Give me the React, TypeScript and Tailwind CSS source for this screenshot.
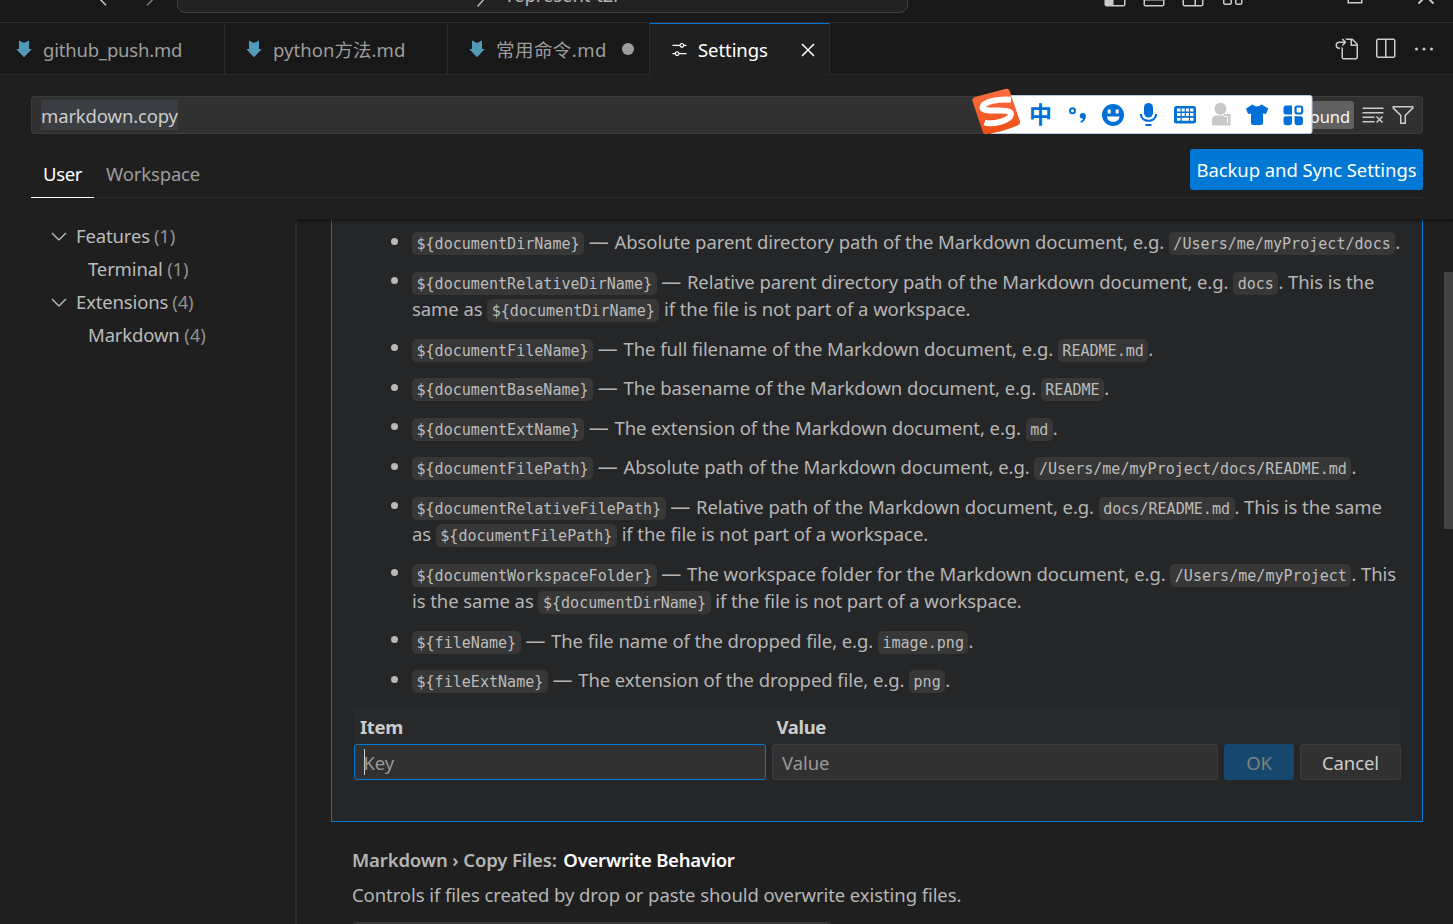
import React from "react";
import { VscSettings, VscClose, VscGoToFile, VscSplitHorizontal, VscEllipsis, VscClearAll, VscFilter, VscChevronDown, VscLayoutSidebarLeft, VscLayoutPanelOff, VscLayoutSidebarRightOff, VscLayout, VscChromeMaximize, VscChromeClose, VscArrowLeft, VscArrowRight, VscSearch } from "react-icons/vsc";

const Code = ({ children }: { children: React.ReactNode }) => (
  <code className="rounded-[5px] bg-[#373737] px-[4.5px] py-[2.5px] align-[0.5px] font-['DejaVu_Sans_Mono',monospace] text-[15.06px] leading-none tracking-normal text-[#bcbcbc]">{children}</code>
);

type Part = string | { c: string };

const rows: { name: string; lines: Part[][] }[] = [
  { name: "DirName", lines: [[{ c: "${documentDirName}" }, " — Absolute parent directory path of the Markdown document, e.g. ", { c: "/Users/me/myProject/docs" }, "."]] },
  { name: "RelDir", lines: [[{ c: "${documentRelativeDirName}" }, " — Relative parent directory path of the Markdown document, e.g. ", { c: "docs" }, ". This is the"], ["same as ", { c: "${documentDirName}" }, " if the file is not part of a workspace."]] },
  { name: "FileName", lines: [[{ c: "${documentFileName}" }, " — The full filename of the Markdown document, e.g. ", { c: "README.md" }, "."]] },
  { name: "BaseName", lines: [[{ c: "${documentBaseName}" }, " — The basename of the Markdown document, e.g. ", { c: "README" }, "."]] },
  { name: "ExtName", lines: [[{ c: "${documentExtName}" }, " — The extension of the Markdown document, e.g. ", { c: "md" }, "."]] },
  { name: "FilePath", lines: [[{ c: "${documentFilePath}" }, " — Absolute path of the Markdown document, e.g. ", { c: "/Users/me/myProject/docs/README.md" }, "."]] },
  { name: "RelFile", lines: [[{ c: "${documentRelativeFilePath}" }, " — Relative path of the Markdown document, e.g. ", { c: "docs/README.md" }, ". This is the same"], ["as ", { c: "${documentFilePath}" }, " if the file is not part of a workspace."]] },
  { name: "Workspace", lines: [[{ c: "${documentWorkspaceFolder}" }, " — The workspace folder for the Markdown document, e.g. ", { c: "/Users/me/myProject" }, ". This"], ["is the same as ", { c: "${documentDirName}" }, " if the file is not part of a workspace."]] },
  { name: "File", lines: [[{ c: "${fileName}" }, " — The file name of the dropped file, e.g. ", { c: "image.png" }, "."]] },
  { name: "FileExt", lines: [[{ c: "${fileExtName}" }, " — The extension of the dropped file, e.g. ", { c: "png" }, "."]] },
];

const LinePart = ({ part }: { part: Part }) => {
  if (typeof part !== "string") return <Code>{part.c}</Code>;
  if (part.startsWith(" — ")) return <span> <span className="text-[20px]">—</span><span className="ml-[1px]">{part.slice(2)}</span></span>;
  return <span>{part}</span>;
};

const MdIcon = () => (
  <svg className="h-[18px] w-4 shrink-0" viewBox="0 0 16 18"><path fill="#519aba" d="M3 0.5 8 3l5-2.5V9h2.8L8 17.3 0.2 9H3z" /></svg>
);

const ImeBar = () => (
  <div className="absolute -top-[10px] left-[939px] flex h-[48px] w-[342px]">
    <svg className="h-full w-full" viewBox="971 87 342 48" fill="#0070d8">
      <defs>
        <linearGradient id="ime" x1="0" y1="0" x2="0" y2="1"><stop offset="0" stopColor="#fb7042" /><stop offset="1" stopColor="#ee4d12" /></linearGradient>
      </defs>
      <rect x="990" y="95.5" width="322" height="38" rx="2" fill="#fff" stroke="#b9cbe4" />
      <path fill="url(#ime)" d="M975 97 1006 88.8Q1008.500 88.300 1009.500 90.500L1020 121.500Q1020.500 124 1018 125.300Q1003 132 986 134.300Q983.500 134.500 982.800 132L972.300 100.500Q972 98 975 97Z" />
      <path fill="none" stroke="#fff" strokeWidth="6" d="M1011 99.700C1000 98.500 982.500 101.500 982.500 107.500C983 114 1010.500 107 1011 114C1010.500 121 992 125 984.500 122.500" />
      <text x="1029" y="123" fontSize="23" fontWeight="700" className="font-['Noto_Sans_CJK_SC',sans-serif] tracking-normal">中</text>
      <circle cx="1072.500" cy="110.800" r="2.500" fill="none" stroke="#0070d8" strokeWidth="2" />
      <path d="M1079.700 116a3.100 3.100 0 1 1 6.200 0c0 3.500-2 6-5.200 7v-2c1.500-.5 2.200-1.300 2.300-2.200-2 0-3.300-1.200-3.300-2.800z" />
      <circle cx="1113" cy="115" r="11" />
      <path fill="#fff" d="M1107.700 109.500h3v4h-3zM1115.700 109.500h3v4h-3zM1107 116.500h12.500c0 7-12.500 7-12.500 0z" />
      <rect x="1144" y="103" width="9" height="14.500" rx="4.500" />
      <path fill="none" stroke="#0070d8" strokeWidth="2.200" d="M1140.800 114c.5 9 14.900 9 15.400 0M1145.500 125h6" />
      <rect x="1174" y="106" width="22" height="17.500" rx="2.500" />
      <path fill="#fff" d="M1177 108.500h3.500v3h-3.500zM1181.700 108.500h3v3h-3zM1185.900 108.500h3v3h-3zM1190 108.500h3.500v3h-3.500zM1177 113h3.500v3h-3.500zM1181.700 113h3v3h-3zM1185.900 113h3v3h-3zM1190 113h3.500v3h-3.500zM1177 117.700h3.500v3h-3.500zM1181.700 117.700h7.200v3h-7.200zM1190 117.700h3.500v3h-3.500z" />
      <g fill="#c8c8c8"><circle cx="1220.500" cy="108.800" r="6" /><path d="M1212 125v-5q0-4.500 4.500-4.500h7.500v-1.500h6.500v11.500h-18z" /></g>
      <path fill="none" stroke="#fff" d="M1224 116.500h3.500v6.500" />
      <path d="M1246 108.500 1252.500 104.500q4.500 4 9 0l6.800 4-2.300 5.500-3 -.5V123q0 2-2 2h-8q-2 0-2-2v-9.500l-3 .5z" />
      <path d="M1286.500 105.500h5.500v9h-6a2.500 2.500 0 0 1-2.500-2.500v-3.500a3 3 0 0 1 3-3zM1286 116.200h6v6a3 3 0 0 1-3 3h-2.500a3 3 0 0 1-3-3v-3.500a2.500 2.500 0 0 1 2.500-2.500zM1294.500 116.200h6a2.500 2.500 0 0 1 2.500 2.500v3.500a3 3 0 0 1-3 3h-2.500a3 3 0 0 1-3-3z" />
      <rect x="1295.500" y="106.500" width="6.700" height="7" rx="2" fill="#fff" stroke="#0070d8" strokeWidth="2.200" />
    </svg>
  </div>
);

export default function App() {
  return (
    <div className="flex h-[924px] w-[1453px] flex-col overflow-hidden bg-[#1f1f1f] font-['Noto_Sans','Noto_Sans_CJK_SC',sans-serif] text-[18.5px] tracking-[-0.08px] text-[#b5b5b5]">
      <header className="flex h-[23px] shrink-0 items-end overflow-hidden border-b border-[#2b2b2b] bg-[#181818]">
        <div className="mb-[13px] flex w-[177px] shrink-0 items-center gap-[15px] pl-[95px] text-2xl">
          <VscArrowLeft className="shrink-0 text-[#cccccc]" />
          <VscArrowRight className="shrink-0 text-[#777]" />
        </div>
        <div className="mb-[9px] flex h-[36px] w-[731px] shrink-0 items-center justify-center rounded-lg border border-[#3f3f3f] bg-[#222222] pl-[9px]">
          <VscSearch className="mr-[7px] text-2xl" /><span className="leading-6">represent-t2i</span>
        </div>
        <div className="mb-[14px] ml-[195px] flex gap-[15px] text-2xl text-[#cccccc]">
          <VscLayoutSidebarLeft /><VscLayoutPanelOff /><VscLayoutSidebarRightOff /><VscLayout />
        </div>
        <div className="mb-[14px] ml-[99px] flex gap-[47px] text-2xl text-[#cccccc]"><VscChromeMaximize /><VscChromeClose /></div>
      </header>

      <nav className="flex h-[52px] shrink-0 bg-[#181818] text-[#9d9d9d]">
        <div className="flex w-[225px] items-center gap-[11px] border-r border-b border-[#2b2b2b] pl-4"><MdIcon /><span className="pt-[2px] tracking-[-0.2px]">github_push.md</span></div>
        <div className="flex w-[223px] items-center gap-[11px] border-r border-b border-[#2b2b2b] pl-[21px]"><MdIcon /><span className="pt-[2px] tracking-[0.05px]">python方法.md</span></div>
        <div className="flex w-[202px] items-center gap-[11px] border-r border-b border-[#2b2b2b] pl-[21px]"><MdIcon /><span className="w-[111px] pt-[2px] tracking-[0.45px] whitespace-nowrap">常用命令.md</span><i className="ml-[4px] size-3 rounded-full bg-[#9d9d9d]" /></div>
        <div className="flex w-[180px] items-center border-t border-r border-t-[#0078d4] border-r-[#2b2b2b] bg-[#1f1f1f] pl-5 text-white"><VscSettings className="text-[19px]" /><span className="ml-[9px] w-[70px]">Settings</span><VscClose className="ml-[28px] text-2xl" /></div>
        <div className="flex flex-1 items-center justify-end gap-[15px] border-b border-[#2b2b2b] pr-[17px] text-2xl text-[#cccccc]"><VscGoToFile /><VscSplitHorizontal /><VscEllipsis /></div>
      </nav>

      <div className="relative mt-[21px] ml-[31px] flex h-[38px] w-[1392px] shrink-0 items-center rounded-[3px] border border-[#3c3c3c] bg-[#313131] pl-[9px] text-[#cccccc]">
        <span className="h-[30px] bg-[#3a3d41] leading-[31px] tracking-[-0.15px]">markdown.copy</span>
        <span className="ml-auto flex h-7 w-[140px] items-center justify-end rounded-[3px] bg-[#616161] pt-[4px] pr-1 text-[16.5px] whitespace-nowrap text-[#f8f8f8]">5 Settings Found</span>
        <VscClearAll className="ml-[7px] text-2xl" /><VscFilter className="mr-[7px] ml-[6px] text-2xl" />
        <ImeBar />
      </div>

      <div className="mt-[14px] ml-[31px] flex h-[50px] w-[1392px] shrink-0 border-b border-[#2b2b2b]">
        <div className="-mb-px flex w-[63px] items-center justify-center border-b border-white pt-[2px] tracking-[-0.35px] text-white">User</div>
        <div className="flex items-center pt-[3px] pl-3 tracking-[-0.15px] text-[#9d9d9d]">Workspace</div>
        <button className="mt-px ml-auto h-[41px] w-[233px] rounded-[3px] bg-[#0078d4] text-white">Backup and Sync Settings</button>
      </div>

      <main className="mt-[21px] flex min-h-0 flex-1">
        <aside className="w-[295px] shrink-0 leading-[33px] tracking-[-0.15px] text-[#bbbbbb]">
          <div className="flex items-center pl-[47px]"><VscChevronDown className="mr-[5px] text-2xl" />Features <span className="ml-[4px] text-[#919191]">(1)</span></div>
          <div className="pl-[88px]">Terminal <span className="text-[#919191]">(1)</span></div>
          <div className="flex items-center pl-[47px]"><VscChevronDown className="mr-[5px] text-2xl" />Extensions <span className="ml-[4px] text-[#919191]">(4)</span></div>
          <div className="pl-[88px]">Markdown <span className="text-[#919191]">(4)</span></div>
        </aside>
        <section className="relative flex flex-1 flex-col border-l-2 border-[#2b2b2b]">
          <div className="ml-[34px] h-[603px] w-[1092px] shrink-0 border border-t-0 border-[#0078d4] bg-[#252628] pt-[9.2px] pl-[22px]">
            <ul className="flex flex-col gap-3 pl-[58px]">
              {rows.map((r) => (
                <li key={r.name} className="relative leading-[27.5px] whitespace-pre">
                  <i className="absolute top-[9.5px] -left-[21px] size-[7px] rounded-full bg-[#b8b8b8]" />
                  {r.lines.map((line, i) => <div className="h-[27.5px]" key={i}>{line.map((p, j) => <LinePart key={j} part={p} />)}</div>)}
                </li>
              ))}
            </ul>
            <div className="mt-[14.8px] flex h-9 w-[1047px] items-center bg-[#28292b] pt-px pl-[6px] font-bold tracking-[-0.35px] text-[#cccccc]"><span className="w-[416.5px]">Item</span><span>Value</span></div>
            <div className="flex h-9 gap-[6px] text-[#989898]">
              <div className="flex w-[412px] items-center rounded-[3px] border border-[#0078d4] bg-[#313131] pl-[9px]"><span className="-mr-[1.5px] h-[26px] w-px bg-[#cccccc]" /><span className="pt-px">Key</span></div>
              <div className="flex w-[446px] items-center rounded-[3px] border border-[#3c3c3c] bg-[#313131] pt-px pl-[9px]">Value</div>
              <button className="w-[70px] rounded-[3px] bg-[#16476d] pt-px text-[#808080]">OK</button>
              <button className="w-[101px] rounded-[3px] border border-[#3c3c3c] bg-[#313131] pt-px text-[#cccccc]">Cancel</button>
            </div>
          </div>
          <div className="mt-[22px] ml-[55px] leading-8 tracking-[-0.13px]"><b className="font-semibold">Markdown › Copy Files: <span className="ml-[2px] tracking-[-0.25px] text-white">Overwrite Behavior</span></b></div>
          <div className="mt-[3px] ml-[55px] leading-8">Controls if files created by drop or paste should overwrite existing files.</div>
          <div className="mt-[11px] ml-[55px] h-8 w-[480px] shrink-0 rounded border border-[#3c3c3c] bg-[#313131]" />
          <div className="absolute top-0 -left-[2px] h-[5px] w-[1158px] bg-linear-to-b from-black/50 to-transparent" />
          <div className="absolute top-[53px] right-0 h-[257px] w-[9px] bg-[#434343]" />
        </section>
      </main>
    </div>
  );
}
